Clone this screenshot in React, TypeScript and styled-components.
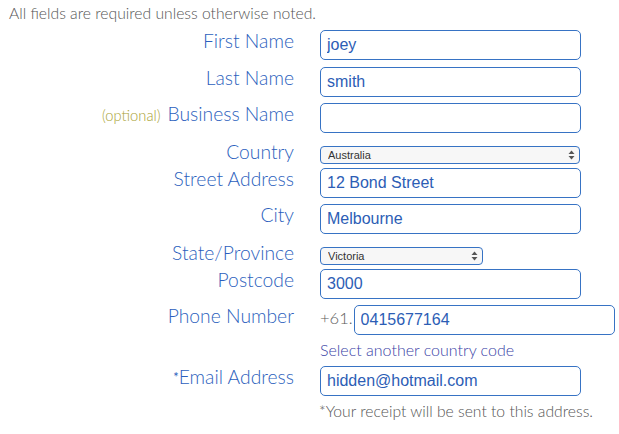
import styled, { createGlobalStyle } from "styled-components";

const GlobalStyle = createGlobalStyle`
  body {
    margin: 0;
    background: #ffffff;
    font-family: "Lato", "Open Sans", sans-serif;
  }
`;

const Page = styled.div`
  width: 619px;
  height: 434px;
  padding: 4px 0 0 9px;
  box-sizing: border-box;
  overflow: hidden;
`;

const Notice = styled.p`
  margin: 0 0 8px;
  font-size: 15.7px;
  line-height: 18px;
  color: #555555;
  font-weight: 300;
`;

const Form = styled.form`
  display: flex;
  flex-direction: column;
`;

const Row = styled.div<{ $select?: boolean }>`
  display: grid;
  grid-template-columns: 285px 1fr;
  column-gap: 26px;
  align-items: start;
  padding-top: ${(p) => (p.$select ? "6px" : "0")};
  margin-bottom: ${(p) => (p.$select ? "4px" : "6.5px")};
`;

const Label = styled.label<{ $select?: boolean }>`
  text-align: right;
  font-size: 19.3px;
  line-height: ${(p) => (p.$select ? "18px" : "24px")};
  margin-top: ${(p) => (p.$select ? "-3px" : "-1px")};
  color: #2c5fbd;
  font-weight: 300;
  white-space: nowrap;
`;

const Optional = styled.span`
  font-size: 14.7px;
  color: #a9a233;
  margin-right: 7px;
`;

const Star = styled.span`
  font-size: 13px;
  font-weight: 400;
  vertical-align: top;
`;

const Field = styled.div`
  display: flex;
  flex-direction: column;
`;

const Input = styled.input`
  width: 261px;
  height: 30px;
  box-sizing: border-box;
  border: 1.5px solid #3773c4;
  border-radius: 5px;
  padding: 0 6px;
  font-family: "Liberation Sans", Arial, sans-serif;
  font-size: 16px;
  font-weight: 500;
  color: #2c5db5;
  background: #ffffff;
  outline: none;
`;

const Select = styled.select<{ $width: number }>`
  width: ${(p) => p.$width}px;
  height: 18px;
  box-sizing: border-box;
  border: 1px solid #3773c4;
  border-radius: 4px;
  padding: 0 16px 0 7px;
  font-family: "Liberation Sans", Arial, sans-serif;
  font-size: 11px;
  color: #333333;
  background: #f7f7f7;
  appearance: none;
  -webkit-appearance: none;
  outline: none;
`;

const SelectWrap = styled.div`
  position: relative;
  display: inline-flex;
  width: fit-content;
`;

const Arrows = styled.svg`
  position: absolute;
  right: 5px;
  top: 4px;
  pointer-events: none;
`;

const PhoneGroup = styled.div`
  display: flex;
  align-items: center;
  gap: 1px;
`;

const Prefix = styled.span`
  font-size: 16.5px;
  color: #5a5a5a;
  font-weight: 300;
  margin-top: -4px;
`;

const Help = styled.span<{ $tone: "link" | "muted" }>`
  font-size: ${(p) => (p.$tone === "link" ? "16px" : "15.7px")};
  line-height: 20px;
  margin-top: 5px;
  margin-bottom: -1px;
  color: ${(p) => (p.$tone === "link" ? "#3a3fa6" : "#555555")};
  font-weight: 300;
  margin-left: ${(p) => (p.$tone === "muted" ? "-1px" : "0")};
`;

function SelectBox({ value, width }: { value: string; width: number }) {
  return (
    <SelectWrap>
      <Select $width={width} defaultValue={value}>
        <option>{value}</option>
      </Select>
      <Arrows width="7" height="10" viewBox="0 0 7 10">
        <path d="M3.5 0.5 L6.5 4 H0.5 Z" fill="#555" />
        <path d="M3.5 9.5 L6.5 6 H0.5 Z" fill="#555" />
      </Arrows>
    </SelectWrap>
  );
}

export default function App() {
  return (
    <>
      <GlobalStyle />
      <Page>
        <Notice>All fields are required unless otherwise noted.</Notice>
        <Form>
          <Row>
            <Label>First Name</Label>
            <Input defaultValue="joey" />
          </Row>
          <Row>
            <Label>Last Name</Label>
            <Input defaultValue="smith" />
          </Row>
          <Row>
            <Label>
              <Optional>(optional)</Optional>Business Name
            </Label>
            <Input defaultValue="" />
          </Row>
          <Row $select>
            <Label $select>Country</Label>
            <SelectBox value="Australia" width={260} />
          </Row>
          <Row>
            <Label>Street Address</Label>
            <Input defaultValue="12 Bond Street" />
          </Row>
          <Row>
            <Label>City</Label>
            <Input defaultValue="Melbourne" />
          </Row>
          <Row $select>
            <Label $select>State/Province</Label>
            <SelectBox value="Victoria" width={163} />
          </Row>
          <Row>
            <Label>Postcode</Label>
            <Input defaultValue="3000" />
          </Row>
          <Row>
            <Label>Phone Number</Label>
            <Field>
              <PhoneGroup>
                <Prefix>+61.</Prefix>
                <Input defaultValue="0415677164" />
              </PhoneGroup>
              <Help $tone="link">Select another country code</Help>
            </Field>
          </Row>
          <Row>
            <Label>
              <Star>*</Star>Email Address
            </Label>
            <Field>
              <Input defaultValue="hidden@hotmail.com" />
              <Help $tone="muted">*Your receipt will be sent to this address.</Help>
            </Field>
          </Row>
        </Form>
      </Page>
    </>
  );
}
